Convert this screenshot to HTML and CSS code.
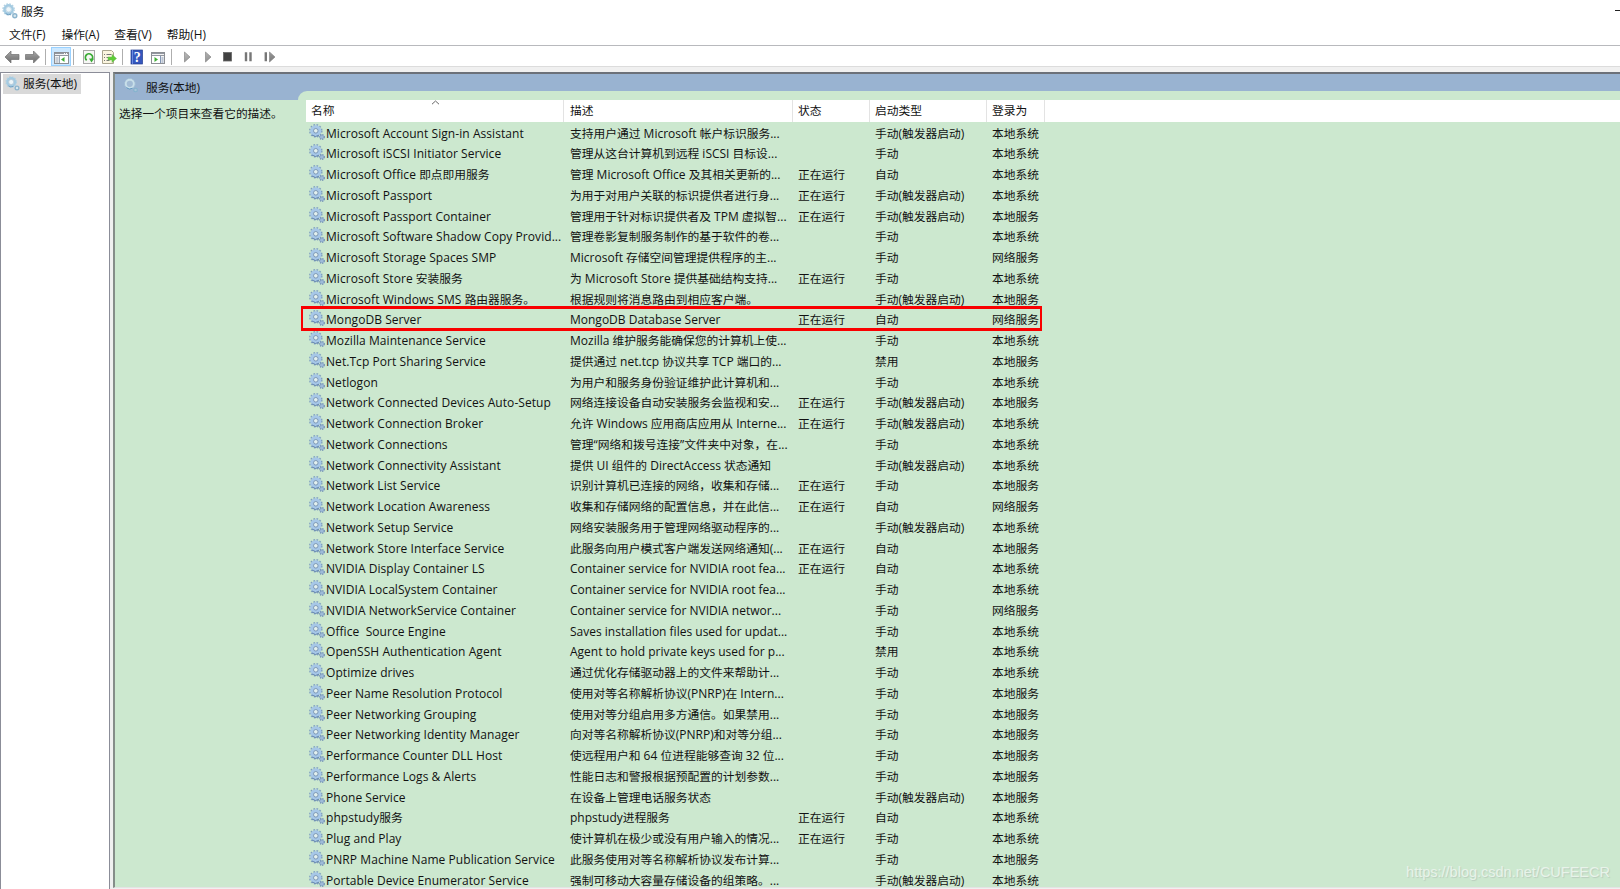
FILE: index.html
```html
<!DOCTYPE html>
<html lang="zh-CN">
<head>
<meta charset="utf-8">
<title>服务</title>
<link rel="stylesheet" href="styles.css">
</head>
<body>
<svg class="defs" width="0" height="0">
  <defs>
    <symbol id="gear" viewBox="0 0 16 16">
      <circle cx="6.8" cy="6.800" r="6" fill="none" stroke="#7f9fc0" stroke-width="1.500" stroke-dasharray="1.700 1.440"/>
      <circle cx="6.8" cy="6.800" r="4" fill="#cfe3f1" stroke="#a6c7e8" stroke-width="3"/>
      <circle cx="6.8" cy="6.800" r="2.300" fill="#e3f0ee" stroke="#6f8cae" stroke-width=".9"/>
      <path d="M3 11a5.600 5.600 0 0 0 7 .2" fill="none" stroke="#6585ad" stroke-width="1"/>
      <circle cx="13" cy="13" r="2.300" fill="#9ebbd8" stroke="#7592b4" stroke-width="1.300" stroke-dasharray="1.200 .8"/>
    </symbol>
    <symbol id="gear-soft" viewBox="0 0 16 16">
      <circle cx="6.600" cy="6.400" r="5.600" fill="none" stroke="#b5d2e2" stroke-width="1.400" stroke-dasharray="1.700 1.230"/>
      <circle cx="6.600" cy="6.400" r="4.100" fill="none" stroke="#a4cbe2" stroke-width="2.400"/>
      <circle cx="6.600" cy="6.400" r="2.700" fill="#eef6f9" stroke="#8fb4cf" stroke-width=".5"/>
      <path d="M3.600 10.600a5 5 0 0 0 5.500.4" fill="none" stroke="#6c9dc1" stroke-width="1"/>
      <circle cx="12.800" cy="12.700" r="2" fill="#d7e8ef" stroke="#8cb4cd" stroke-width="1.400"/>
    </symbol>
    <symbol id="gear-pale" viewBox="0 0 16 16">
      <circle cx="6.200" cy="6.200" r="5.600" fill="none" stroke="#a9c6d9" stroke-width="1" stroke-dasharray="1.700 1.230"/>
      <circle cx="6.200" cy="6.200" r="4.300" fill="#a3bcd5" stroke="#c8dfe9" stroke-width="2"/>
      <path d="M2.500 10.200a5.400 5.400 0 0 0 6.500.8" fill="none" stroke="#5d95be" stroke-width="1"/>
      <circle cx="12.300" cy="12.800" r="1.900" fill="#a9c3d8" stroke="#83b3cd" stroke-width="1.200"/>
    </symbol>
  </defs>
</svg>
<div class="window">
  <header class="titlebar"><svg class="title-icon"><use href="#gear-soft"/></svg><span>服务</span><i class="minimize"></i></header>
  <nav class="menu"><span>文件(F)</span><span>操作(A)</span><span>查看(V)</span><span>帮助(H)</span></nav>
  <div class="toolbar">
    <svg class="tools" width="290" height="20" viewBox="0 0 290 20">
      <defs>
        <linearGradient id="metal" x1="0" y1="0" x2="0" y2="1"><stop offset="0" stop-color="#aaa"/><stop offset=".5" stop-color="#888"/><stop offset="1" stop-color="#707070"/></linearGradient>
        <linearGradient id="play" x1="0" y1="0" x2="1" y2="1"><stop offset="0" stop-color="#bbb"/><stop offset="1" stop-color="#777"/></linearGradient>
      </defs>
      <path d="M5 11l6-6v3.500h8v5h-8V17z" fill="url(#metal)" stroke="#707070" stroke-width=".7"/>
      <path d="M39.500 11l-6-6v3.500h-8v5h8V17z" fill="url(#metal)" stroke="#707070" stroke-width=".7"/>
      <path d="M45.500 3v16M73.500 3v16M122.500 3v16M171.500 3v16" stroke="#aeaeae"/>
      <rect x="51.500" y="1.500" width="19" height="18" fill="#cce8ff" stroke="#99d1ff"/>
      <rect x="54.500" y="6.500" width="14" height="11" fill="#f4f4f4" stroke="#8c8f94"/>
      <path d="M55 7.500h13M55 9.500h13" stroke="#9297a0"/>
      <path d="M64 7.500h1M66 7.500h1" stroke="#fff"/>
      <path d="M59.500 10v7M55.500 12h3M55.500 14h3M55.500 16h3" stroke="#9ba8b8"/>
      <rect x="60" y="10" width="8" height="7" fill="#fff"/>
      <path d="M64.500 11v5l-3.500-2.500z" fill="#3fae35"/>
      <rect x="83.500" y="4.500" width="11" height="13" fill="#f7f7f5" stroke="#a8a8a8"/>
      <path d="M86.700 14.200a3.600 3.600 0 1 1 5.200-.6" fill="none" stroke="#3aab36" stroke-width="1.800"/>
      <path d="M89 12.500l5 .2-2.500 3.700z" fill="#3aab36"/>
      <path d="M102.500 4.500h9l2 2v11h-11z" fill="#fbf5df" stroke="#aaa58e"/>
      <path d="M104 8.500h1M106.500 8.500h5M104 11.500h1M106.500 11.500h3M104 14.500h1M106.500 14.500h3" stroke="#777"/>
      <path d="M108 11h4V8.500l4.500 4-4.500 4V14h-4z" fill="#5dcc37" stroke="#70b858" stroke-width=".5"/>
      <rect x="131" y="4" width="11.500" height="14" fill="#3557be" stroke="#233c91" stroke-width=".7"/>
      <path d="M132.500 4v14" stroke="#6c8be0"/>
      <text x="133.800" y="16" class="help-mark">?</text>
      <rect x="151.500" y="6.500" width="13" height="11" fill="#f4f4f4" stroke="#8c8f94"/>
      <path d="M152 7.500h12M152 9.500h12" stroke="#9297a0"/>
      <path d="M160.500 10v7M161.500 12h2M161.500 14h2M161.500 16h2" stroke="#8396b4"/>
      <rect x="152" y="10" width="8" height="7" fill="#fff"/>
      <path d="M154.500 11v5l3.500-2.500z" fill="#3fae35"/>
      <path d="M184.500 6v10l5.500-5zM205.500 6v10l5.500-5zM269.500 6v10l5.500-5z" fill="url(#play)" stroke="#888" stroke-width=".7"/>
      <rect x="223.500" y="6.500" width="8" height="8.500" fill="#414141" stroke="#666" stroke-width=".8"/>
      <path d="M246 6.300v9M250.500 6.300v9M265.800 6.300v9" stroke="#777" stroke-width="2.400"/>
    </svg>
  </div>
  <main class="workspace">
    <aside class="tree"><div class="tree-item"><svg class="tree-icon"><use href="#gear-soft"/></svg><span>服务(本地)</span></div></aside>
    <section class="panel">
      <div class="side">
        <div class="side-head"><svg class="side-icon"><use href="#gear-pale"/></svg><span>服务(本地)</span></div>
        <p class="hint">选择一个项目来查看它的描述。</p>
      </div>
      <div class="list">
        <div class="list-cap"></div>
        <div class="cols head"><span>名称</span><span>描述</span><span>状态</span><span>启动类型</span><span>登录为</span><svg class="sort" viewBox="0 0 9 5"><path d="M1 4.200L4.500 1 8 4.200" fill="none" stroke="#666" stroke-width="1"/></svg></div>
        <div class="rows" id="rows"></div>
      </div>
    </section>
  </main>
  <div class="watermark">https://blog.csdn.net/CUFEECR</div>
</div>
<script src="app.js"></script>
</body>
</html>
```

FILE: styles.css
```css
*, *::after { box-sizing: border-box; }
body { margin: 0; background: #fff; color: #111; font: 11.75px/20px "Noto Sans CJK SC", sans-serif; }
.defs { position: absolute; }
.window { position: relative; width: 1620px; height: 889px; overflow: hidden; display: flex; flex-direction: column; }
.lat { font-family: "Open Sans", "Noto Sans", sans-serif; font-size: 12px; line-height: 1; }
.titlebar { height: 23px; display: flex; align-items: center; padding: 0 0 2px 2px; gap: 3px; flex: none; }
.title-icon { width: 16px; height: 16px; }
.minimize { width: 5px; height: 1px; background: #222; margin-left: auto; }
.menu { height: 23px; display: flex; align-items: center; padding: 0 0 0 9px; border-bottom: 1px solid #b8b9bd; flex: none; }
.menu span { white-space: nowrap; }
.menu > span { width: 52.600px; }
.menu .lat { font-size: 11.800px; }
.toolbar { height: 21px; border-bottom: 1px solid #dcdcdc; flex: none; }
.tools { display: block; }
.help-mark { font: bold 14px "Liberation Serif", serif; fill: #fff; }
.workspace { flex: 1; min-height: 0; background: #f0f0f0; padding-top: 5px; display: flex; gap: 3px; }
.tree { width: 110px; background: #fff; border: 1px solid #8b8d98; border-bottom: 0; padding: 1px 0 0 2px; }
.tree-item { width: 78px; height: 20px; background: #d9d9d9; display: flex; align-items: center; gap: 3px; padding: 0 0 2px 2px; white-space: nowrap; }
.tree-icon { width: 15px; height: 15px; flex: none; }
.panel { flex: 1; display: flex; background: #cce8cf; border-top: 2px solid #6c7179; border-left: 2px solid #858d89; border-bottom: 1px solid #e3e3e3; margin-bottom: 1px; overflow: hidden; }
.side { width: 183px; flex: none; }
.side-head { height: 26px; background: #99b3d1; display: flex; align-items: center; padding: 0 0 0 9px; gap: 7px; }
.side-icon { width: 15px; height: 15px; flex: none; margin-top: -3px; }
.hint { margin: 3px 0 0 4px; font-size: 11.700px; white-space: nowrap; }
.list { flex: 1; min-width: 0; background: linear-gradient(#99b3d1 26px, #cce8cf 26px); }
.list-cap { height: 9px; margin-top: 17px; background: #cce8cf; border-top-left-radius: 9px; }
.cols { display: grid; grid-template-columns: 258px 229px 77px 117px 58px; margin-left: 8px; }
.head { position: relative; height: 22px; background: #fff; margin-left: 8px; }
.head span { padding: 0 0 0 6px; border-right: 1px solid #e3e3e3; }
.head span:nth-child(n+3), .row > span:nth-child(n+3) { padding-left: 5px; }
.head span:first-child { padding-left: 5px; }
.sort { position: absolute; left: 125px; top: 0; width: 9px; height: 5px; }
.rows { padding-top: .3px; }
.row { height: 20.750px; align-items: center; }
.row > span { padding-left: 6px; white-space: pre; }
.row .name { padding-left: 3px; display: flex; align-items: center; gap: 1px; }
.name .lat { letter-spacing: .06px; }
.gear { width: 16px; height: 16px; flex: none; margin-top: -2px; }
.row.marked { position: relative; }
.row.marked::after { content: ""; position: absolute; left: -5px; top: -3px; width: 741px; height: 25px; border: 3px solid #f90000; border-width: 3px 2px; }
.watermark { position: absolute; right: 10px; bottom: 7px; font: 14.500px/20px "Liberation Sans", sans-serif; color: #e8f3ea; text-shadow: 1px 1px 1px #b9cdbd; }
```

FILE: app.js
```js
const M = '手动', A = '自动', T = '手动(触发器启动)', D = '禁用';
const S = '本地系统', L = '本地服务', N = '网络服务', R = '正在运行';
const services = [
  ['Microsoft Account Sign-in Assistant', '支持用户通过 Microsoft 帐户标识服务...', '', T, S],
  ['Microsoft iSCSI Initiator Service', '管理从这台计算机到远程 iSCSI 目标设...', '', M, S],
  ['Microsoft Office 即点即用服务', '管理 Microsoft Office 及其相关更新的...', R, A, S],
  ['Microsoft Passport', '为用于对用户关联的标识提供者进行身...', R, T, S],
  ['Microsoft Passport Container', '管理用于针对标识提供者及 TPM 虚拟智...', R, T, L],
  ['Microsoft Software Shadow Copy Provid...', '管理卷影复制服务制作的基于软件的卷...', '', M, S],
  ['Microsoft Storage Spaces SMP', 'Microsoft 存储空间管理提供程序的主...', '', M, N],
  ['Microsoft Store 安装服务', '为 Microsoft Store 提供基础结构支持...', R, M, S],
  ['Microsoft Windows SMS 路由器服务。', '根据规则将消息路由到相应客户端。', '', T, L],
  ['MongoDB Server', 'MongoDB Database Server', R, A, N],
  ['Mozilla Maintenance Service', 'Mozilla 维护服务能确保您的计算机上使...', '', M, S],
  ['Net.Tcp Port Sharing Service', '提供通过 net.tcp 协议共享 TCP 端口的...', '', D, L],
  ['Netlogon', '为用户和服务身份验证维护此计算机和...', '', M, S],
  ['Network Connected Devices Auto-Setup', '网络连接设备自动安装服务会监视和安...', R, T, L],
  ['Network Connection Broker', '允许 Windows 应用商店应用从 Interne...', R, T, S],
  ['Network Connections', '管理“网络和拨号连接”文件夹中对象，在...', '', M, S],
  ['Network Connectivity Assistant', '提供 UI 组件的 DirectAccess 状态通知', '', T, S],
  ['Network List Service', '识别计算机已连接的网络，收集和存储...', R, M, L],
  ['Network Location Awareness', '收集和存储网络的配置信息，并在此信...', R, A, N],
  ['Network Setup Service', '网络安装服务用于管理网络驱动程序的...', '', T, S],
  ['Network Store Interface Service', '此服务向用户模式客户端发送网络通知(...', R, A, L],
  ['NVIDIA Display Container LS', 'Container service for NVIDIA root fea...', R, A, S],
  ['NVIDIA LocalSystem Container', 'Container service for NVIDIA root fea...', '', M, S],
  ['NVIDIA NetworkService Container', 'Container service for NVIDIA networ...', '', M, N],
  ['Office  Source Engine', 'Saves installation files used for updat...', '', M, S],
  ['OpenSSH Authentication Agent', 'Agent to hold private keys used for p...', '', D, S],
  ['Optimize drives', '通过优化存储驱动器上的文件来帮助计...', '', M, S],
  ['Peer Name Resolution Protocol', '使用对等名称解析协议(PNRP)在 Intern...', '', M, L],
  ['Peer Networking Grouping', '使用对等分组启用多方通信。如果禁用...', '', M, L],
  ['Peer Networking Identity Manager', '向对等名称解析协议(PNRP)和对等分组...', '', M, L],
  ['Performance Counter DLL Host', '使远程用户和 64 位进程能够查询 32 位...', '', M, L],
  ['Performance Logs & Alerts', '性能日志和警报根据预配置的计划参数...', '', M, L],
  ['Phone Service', '在设备上管理电话服务状态', '', T, L],
  ['phpstudy服务', 'phpstudy进程服务', R, A, S],
  ['Plug and Play', '使计算机在极少或没有用户输入的情况...', R, M, S],
  ['PNRP Machine Name Publication Service', '此服务使用对等名称解析协议发布计算...', '', M, L],
  ['Portable Device Enumerator Service', '强制可移动大容量存储设备的组策略。...', '', T, S]
];
// Latin runs use a humanist face beside the CJK text.
const mixed = text => text.replace(/[\x20-\x7e“”]+/g, run => `<span class="lat">${run.replace(/&/g, '&amp;')}</span>`);
document.getElementById('rows').innerHTML = services.map(([name, ...rest]) =>
  `<div class="cols row${name === 'MongoDB Server' ? ' marked' : ''}"><span class="name"><svg class="gear"><use href="#gear"/></svg><span>${mixed(name)}</span></span>${rest.map(t => `<span>${mixed(t)}</span>`).join('')}</div>`).join('');
document.querySelectorAll('.menu span, .tree-item span, .side-head span').forEach(el => { el.innerHTML = mixed(el.textContent); });
```
